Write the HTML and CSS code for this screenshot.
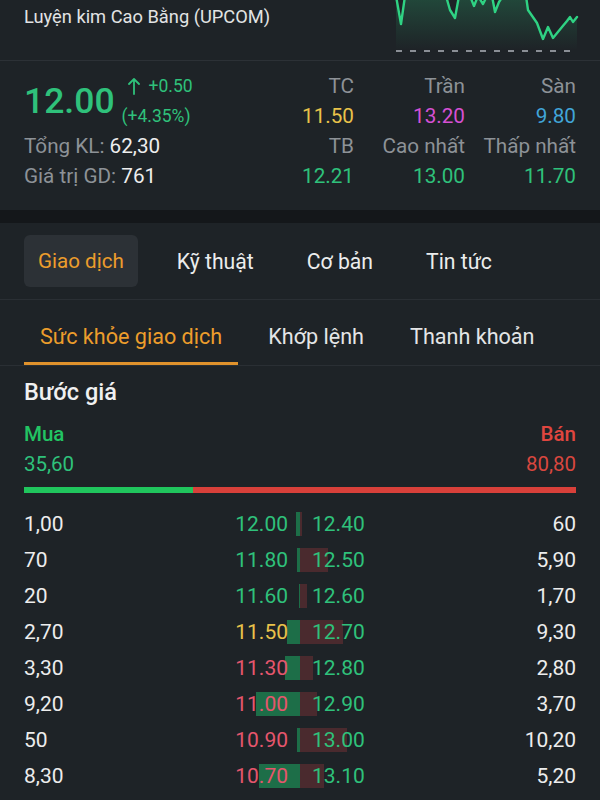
FILE: index.html
```html
<!DOCTYPE html>
<html lang="vi">
<head>
<meta charset="utf-8">
<title>CBI</title>
<link rel="stylesheet" href="styles.css">
</head>
<body>
<div class="app">
  <header class="head">
    <div class="name">Luyện kim Cao Bằng (UPCOM)</div>
    <svg class="spark" width="200" height="60" viewBox="382 0 200 60">
      <defs>
        <linearGradient id="fillg" x1="0" y1="0" x2="0" y2="1">
          <stop offset="0" stop-color="#2fd283" stop-opacity="0.22"/>
          <stop offset="1" stop-color="#2fd283" stop-opacity="0"/>
        </linearGradient>
      </defs>
      <path d="M396,-4 L401,24 L405,-4 L446,-4 L450,10 L455,18 L459,-4 L470,-4 L474,6 L478,-4 L483,4 L487,-4 L492,-4 L495,12 L499,2 L503,-4 L526,-4 L528,10 L537,23 L543,39 L548,27 L553,38 L562,27 L567,21 L570,17 L573,22 L577,17 L577,50 L396,50 Z" fill="url(#fillg)"/>
      <path d="M396,-4 L401,24 L405,-4 M446,-4 L450,10 L455,18 L459,-4 M470,-4 L474,6 L478,-4 L483,4 L487,-4 M492,-4 L495,12 L499,2 L503,-4 M526,-4 L528,10 L537,23 L543,39 L548,27 L553,38 L562,27 L567,21 L570,17 L573,22 L577,17" fill="none" stroke="#2fd283" stroke-width="2.4" stroke-linejoin="round" stroke-linecap="round"/>
      <line x1="396" y1="51" x2="577" y2="51" stroke="#8a8f95" stroke-width="2" stroke-dasharray="6 8"/>
    </svg>
  </header>

  <section class="quote">
    <div class="last">
      <span class="big">12.00</span>
      <div class="chg">
        <div class="chg-top">
          <svg width="12" height="18" viewBox="0 0 12 18"><path d="M6 17V2M1 7l5-5 5 5" stroke="#2fc17b" stroke-width="1.8" fill="none" stroke-linecap="round" stroke-linejoin="round"/></svg>
          <span>+0.50</span>
        </div>
        <div class="chg-bot">(+4.35%)</div>
      </div>
    </div>
    <div class="lbl r">TC</div>
    <div class="lbl r">Trần</div>
    <div class="lbl r">Sàn</div>
    <div class="r yellow">11.50</div>
    <div class="r magenta">13.20</div>
    <div class="r blue">9.80</div>
    <div class="stat"><span class="lbl">Tổng KL:</span> <span class="white">62,30</span></div>
    <div class="lbl r">TB</div>
    <div class="lbl r">Cao nhất</div>
    <div class="lbl r">Thấp nhất</div>
    <div class="stat"><span class="lbl">Giá trị GD:</span> <span class="white">761</span></div>
    <div class="r green">12.21</div>
    <div class="r green">13.00</div>
    <div class="r green">11.70</div>
  </section>

  <div class="band"></div>

  <nav class="tabs">
    <div class="tab active">Giao dịch</div>
    <div class="tab">Kỹ thuật</div>
    <div class="tab">Cơ bản</div>
    <div class="tab">Tin tức</div>
  </nav>

  <nav class="subtabs">
    <div class="sub active">Sức khỏe giao dịch</div>
    <div class="sub">Khớp lệnh</div>
    <div class="sub">Thanh khoản</div>
  </nav>

  <section class="content">
    <h2 class="title">Bước giá</h2>
    <div class="sides">
      <div class="side">
        <div class="side-h green-b">Mua</div>
        <div class="green-b2">35,60</div>
      </div>
      <div class="side right">
        <div class="side-h red-b">Bán</div>
        <div class="red-b2">80,80</div>
      </div>
    </div>
    <div class="ratio">
      <div class="ratio-buy" style="width:30.58%"></div>
      <div class="ratio-sell"></div>
    </div>

    <div class="book">
      <div class="row">
        <div class="vol">1,00</div>
        <div class="bp green" style="--w:4px">12.00</div>
        <div class="sp green" style="--w:2px">12.40</div>
        <div class="vol r">60</div>
      </div>
      <div class="row">
        <div class="vol">70</div>
        <div class="bp green" style="--w:3px">11.80</div>
        <div class="sp green" style="--w:28px">12.50</div>
        <div class="vol r">5,90</div>
      </div>
      <div class="row">
        <div class="vol">20</div>
        <div class="bp green" style="--w:1px">11.60</div>
        <div class="sp green" style="--w:7px">12.60</div>
        <div class="vol r">1,70</div>
      </div>
      <div class="row">
        <div class="vol">2,70</div>
        <div class="bp yellow" style="--w:13px">11.50</div>
        <div class="sp green" style="--w:43px">12.70</div>
        <div class="vol r">9,30</div>
      </div>
      <div class="row">
        <div class="vol">3,30</div>
        <div class="bp pink" style="--w:15px">11.30</div>
        <div class="sp green" style="--w:13px">12.80</div>
        <div class="vol r">2,80</div>
      </div>
      <div class="row">
        <div class="vol">9,20</div>
        <div class="bp pink" style="--w:44px">11.00</div>
        <div class="sp green" style="--w:17px">12.90</div>
        <div class="vol r">3,70</div>
      </div>
      <div class="row">
        <div class="vol">50</div>
        <div class="bp pink" style="--w:3px">10.90</div>
        <div class="sp green" style="--w:47px">13.00</div>
        <div class="vol r">10,20</div>
      </div>
      <div class="row">
        <div class="vol">8,30</div>
        <div class="bp pink" style="--w:41px">10.70</div>
        <div class="sp green" style="--w:24px">13.10</div>
        <div class="vol r">5,20</div>
      </div>
    </div>
  </section>
</div>
</body>
</html>
```

FILE: styles.css
```css
* { box-sizing: border-box; }

html, body {
  margin: 0;
  padding: 0;
  background: #1e2327;
  color: #e8e9ea;
  font-family: Roboto, "Noto Sans", "Liberation Sans", sans-serif;
}

.app {
  width: 600px;
  height: 800px;
  overflow: hidden;
}

/* header */
.head {
  display: flex;
  height: 61px;
  border-bottom: 1px solid #2c3136;
}

.name {
  padding: 5px 0 0 24px;
  font-size: 18.3px;
  line-height: 24px;
  color: #e2e3e4;
}

.spark {
  margin-left: auto;
  margin-right: 18px;
  display: block;
}

/* quote */
.quote {
  display: grid;
  grid-template-columns: 1fr 111px 111px 111px;
  grid-auto-rows: 30px;
  align-items: center;
  padding: 10px 24px 19px;
  font-size: 20.7px;
}

.last {
  grid-row: 1 / 3;
  grid-column: 1;
  display: flex;
  align-items: center;
  gap: 7px;
  height: 60px;
}

.big {
  font-size: 35.5px;
  font-weight: 500;
  color: #2fc17b;
  line-height: 1;
  padding-top: 1px;
}

.chg {
  display: flex;
  flex-direction: column;
  color: #2fc17b;
  font-size: 17.5px;
}

.chg-top {
  display: flex;
  align-items: center;
  gap: 9px;
  padding-left: 6px;
  height: 30px;
}

.chg-top svg { display: block; }

.chg-bot {
  height: 30px;
  line-height: 30px;
}

.r { text-align: right; }

.lbl { color: #8d9297; }

.white { color: #eeeeee; }

.stat { white-space: nowrap; }

.green { color: #2fc17b; }
.yellow { color: #e9c24a; }
.magenta { color: #d650d4; }
.blue { color: #41a5d8; }
.pink { color: #e5566d; }

/* band */
.band {
  height: 13px;
  background: #14171a;
}

/* tabs */
.tabs {
  display: flex;
  gap: 25px;
  padding: 12px 24px;
  border-bottom: 1px solid #2a2f34;
}

.tab {
  display: flex;
  align-items: center;
  height: 52px;
  padding: 0 14px;
  border-radius: 6px;
  font-size: 21.2px;
  color: #eceded;
}

.tab.active {
  background: #2c3136;
  color: #ec9d2c;
  font-size: 20.6px;
}

.subtabs {
  display: flex;
  gap: 14px;
  padding: 0 24px;
  border-bottom: 1px solid #2a2f34;
}

.sub {
  display: flex;
  align-items: center;
  height: 65px;
  padding: 10px 16px 0;
  border-bottom: 3px solid transparent;
  font-size: 21.6px;
  color: #e4e5e6;
}

.sub.active {
  color: #ec9d2c;
  border-bottom-color: #e0922c;
}

/* content */
.content {
  padding: 10px 24px 0;
}

.title {
  margin: 0;
  font-size: 23.5px;
  font-weight: 500;
  line-height: 32px;
  color: #f0f0f0;
}

.sides {
  display: flex;
  justify-content: space-between;
  margin-top: 11px;
  font-size: 20.5px;
  line-height: 30px;
}

.side.right { text-align: right; }

.side-h { font-weight: 500; }

.green-b { color: #22c463; }
.green-b2 { color: #2fc17b; }
.red-b { color: #e0463f; }
.red-b2 { color: #d9473f; }

.ratio {
  display: flex;
  height: 6px;
  margin-top: 8px;
}

.ratio-buy { background: #20c55d; }
.ratio-sell { flex: 1; background: #d8403a; }

.book {
  margin-top: 13px;
}

.row {
  display: grid;
  grid-template-columns: 1fr 138px 138px 1fr;
  height: 36px;
  line-height: 36px;
  font-size: 21px;
}

.vol { color: #ededed; }

.bp {
  text-align: right;
  padding-right: 12px;
  background: linear-gradient(#1d6e48, #1d6e48) right center / var(--w) 24px no-repeat;
}

.sp {
  text-align: left;
  padding-left: 12px;
  background: linear-gradient(#4a2a2e, #4a2a2e) left center / var(--w) 24px no-repeat;
}
```
